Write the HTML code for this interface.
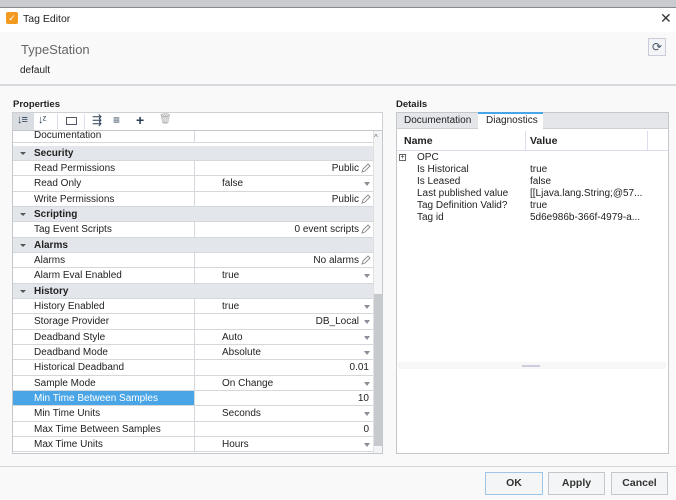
<!DOCTYPE html>
<html style="width:676px;height:500px;overflow:hidden"><head><style>
*{box-sizing:border-box;margin:0;padding:0}
body{width:676px;height:500px;overflow:hidden;background:#f9f9fa;font-family:"Liberation Sans",sans-serif;font-size:10px;color:#222;position:relative}
.a{position:absolute}
.row{position:absolute;left:13px;width:360px;height:15.35px;border-bottom:1px solid #d4d8dd;background:#fff}
.row .n{position:absolute;left:21px;top:2px;white-space:nowrap}
.row .v{position:absolute;left:181px;top:0;bottom:0;right:0;border-left:1px solid #d4d8dd}
.row .v span{position:absolute;left:27px;top:2px}
.row .v .r{left:auto;right:14px}
.dd{position:absolute;right:3px;top:6px;width:0;height:0;border-left:3px solid transparent;border-right:3px solid transparent;border-top:4px solid #8a8f96}
.pen{position:absolute;right:2px;top:2px;width:10px;height:10px}
.g{background:#e3e6ea}
.g .n{font-weight:bold}
.g .t{position:absolute;left:7px;top:6px;border-left:3px solid transparent;border-right:3px solid transparent;border-top:3px solid #555}
.sel{background:#4aa5e6;color:#fff}
.dr{position:absolute;left:405px;white-space:nowrap;font-size:10px}
.btn{position:absolute;top:472px;height:23px;border:1px solid #c4c8cd;background:#f4f5f6;font-weight:bold;font-size:10.5px;text-align:center;line-height:21px;color:#333}
</style></head><body>
<div class="a" style="left:0;top:0;width:676px;height:8px;background:#c9cbce;border-bottom:1px solid #888"></div>
<div class="a" style="left:0;top:8px;width:676px;height:24px;background:#fff"></div>
<div class="a" style="left:6px;top:12px;width:12px;height:12px;background:#f39a21;border-radius:2px;color:#fff;font-size:9px;line-height:12px;text-align:center">✓</div>
<div class="a" style="left:23px;top:13px;font-size:10.5px">Tag Editor</div>
<div class="a" style="left:660px;top:10px;font-size:14px;color:#333">✕</div>
<div class="a" style="left:21px;top:42px;font-size:13px;color:#666">TypeStation</div>
<div class="a" style="left:20px;top:65px;font-size:10px">default</div>
<div class="a" style="left:648px;top:38px;width:18px;height:18px;border:1px solid #ccd;background:#f3f4f6;color:#456;font-size:12px;text-align:center;line-height:16px">⟳</div>
<div class="a" style="left:0;top:84px;width:676px;height:2px;background:#d6d9dd"></div>

<div class="a" style="left:13px;top:99px;font-weight:bold;font-size:9.5px">Properties</div>
<div class="a" style="left:12px;top:112px;width:371px;height:19px;background:#fff;border:1px solid #cdd1d6"></div>
<div class="a" style="left:13px;top:113px;width:21px;height:17px;background:#d9dde2"></div>
<div class="a" style="left:17px;top:114px;font-size:11px;color:#2a3f55;letter-spacing:-1px">↓≡</div>
<div class="a" style="left:38px;top:114px;font-size:11px;color:#2a3f55;letter-spacing:-1px">↓ᶻ</div>
<div class="a" style="left:66px;top:117px;width:11px;height:8px;border:1px solid #556"></div>
<div class="a" style="left:92px;top:113px;font-size:12px;color:#2a3f55">⇶</div>
<div class="a" style="left:113px;top:113px;font-size:12px;color:#2a3f55">≡</div>
<div class="a" style="left:136px;top:112px;font-size:14px;font-weight:bold;color:#2a3f55">+</div>
<div class="a" style="left:159px;top:114px;font-size:10px;color:#aaa">🗑</div>
<div class="a" style="left:57px;top:114px;width:1px;height:15px;background:#dde"></div>
<div class="a" style="left:84px;top:114px;width:1px;height:15px;background:#dde"></div>

<div class="a" style="left:12px;top:130px;width:371px;height:324px;border:1px solid #c4c8cd;background:#fff;overflow:hidden">
<div style="position:absolute;left:-13px;top:-131px;width:384px;height:455px;overflow:hidden">
<div class="row" style="top:127.5px"><div class="n">Documentation</div><div class="v"></div></div>
<div class="row g" style="top:145.5px"><div class="t"></div><div class="n">Security</div></div>
<div class="row" style="top:160.85px"><div class="n">Read Permissions</div><div class="v"><span class="r">Public</span><svg class="pen" viewBox="0 0 10 10"><path d="M1 9L2 6 7 1 9 3 4 8Z" fill="none" stroke="#888" stroke-width=".9"/></svg></div></div>
<div class="row" style="top:176.2px"><div class="n">Read Only</div><div class="v"><span>false</span><div class="dd"></div></div></div>
<div class="row" style="top:191.55px"><div class="n">Write Permissions</div><div class="v"><span class="r">Public</span><svg class="pen" viewBox="0 0 10 10"><path d="M1 9L2 6 7 1 9 3 4 8Z" fill="none" stroke="#888" stroke-width=".9"/></svg></div></div>
<div class="row g" style="top:206.9px"><div class="t"></div><div class="n">Scripting</div></div>
<div class="row" style="top:222.25px"><div class="n">Tag Event Scripts</div><div class="v"><span class="r">0 event scripts</span><svg class="pen" viewBox="0 0 10 10"><path d="M1 9L2 6 7 1 9 3 4 8Z" fill="none" stroke="#888" stroke-width=".9"/></svg></div></div>
<div class="row g" style="top:237.6px"><div class="t"></div><div class="n">Alarms</div></div>
<div class="row" style="top:252.95px"><div class="n">Alarms</div><div class="v"><span class="r">No alarms</span><svg class="pen" viewBox="0 0 10 10"><path d="M1 9L2 6 7 1 9 3 4 8Z" fill="none" stroke="#888" stroke-width=".9"/></svg></div></div>
<div class="row" style="top:268.3px"><div class="n">Alarm Eval Enabled</div><div class="v"><span>true</span><div class="dd"></div></div></div>
<div class="row g" style="top:283.65px"><div class="t"></div><div class="n">History</div></div>
<div class="row" style="top:299px"><div class="n">History Enabled</div><div class="v"><span>true</span><div class="dd"></div></div></div>
<div class="row" style="top:314.35px"><div class="n">Storage Provider</div><div class="v"><span class="r">DB_Local</span><div class="dd"></div></div></div>
<div class="row" style="top:329.7px"><div class="n">Deadband Style</div><div class="v"><span>Auto</span><div class="dd"></div></div></div>
<div class="row" style="top:345.05px"><div class="n">Deadband Mode</div><div class="v"><span>Absolute</span><div class="dd"></div></div></div>
<div class="row" style="top:360.4px"><div class="n">Historical Deadband</div><div class="v"><span style="left:auto;right:4px">0.01</span></div></div>
<div class="row" style="top:375.75px"><div class="n">Sample Mode</div><div class="v"><span>On Change</span><div class="dd"></div></div></div>
<div class="row" style="top:391.1px"><div class="n sel" style="left:0;width:181px;height:14px;padding-left:21px;top:0;padding-top:2px">Min Time Between Samples</div><div class="v"><span style="left:auto;right:4px">10</span></div></div>
<div class="row" style="top:406.45px"><div class="n">Min Time Units</div><div class="v"><span>Seconds</span><div class="dd"></div></div></div>
<div class="row" style="top:421.8px"><div class="n">Max Time Between Samples</div><div class="v"><span style="left:auto;right:4px">0</span></div></div>
<div class="row" style="top:437.15px"><div class="n">Max Time Units</div><div class="v"><span>Hours</span><div class="dd"></div></div></div>
</div>
<div class="a" style="left:360px;top:0;width:10px;height:322px;background:#f3f4f5;border-left:1px solid #e0e0e0"></div>
<div class="a" style="left:361px;top:163px;width:8px;height:152px;background:#c6c9cd"></div>
<div class="a" style="left:361px;top:2px;font-size:8px;color:#666">^</div>
</div>

<div class="a" style="left:396px;top:99px;font-weight:bold;font-size:9.5px">Details</div>
<div class="a" style="left:396px;top:112px;width:273px;height:342px;border:1px solid #c4c8cd;background:#fff"></div>
<div class="a" style="left:397px;top:113px;width:271px;height:16px;background:#e4e6e9;border-bottom:1px solid #cdd1d6"></div>
<div class="a" style="left:404px;top:115px;font-size:10px">Documentation</div>
<div class="a" style="left:478px;top:112px;width:65px;height:18px;background:#fff;border-top:2px solid #4aa5e6"></div>
<div class="a" style="left:486px;top:115px;font-size:10px">Diagnostics</div>
<div class="a" style="left:397px;top:131px;width:271px;height:20px;background:#fff;border-bottom:1px solid #dde"></div>
<div class="a" style="left:404px;top:135px;font-weight:bold;font-size:10.5px">Name</div>
<div class="a" style="left:525px;top:131px;width:1px;height:20px;background:#dde"></div>
<div class="a" style="left:647px;top:131px;width:1px;height:20px;background:#dde"></div>
<div class="a" style="left:530px;top:135px;font-weight:bold;font-size:10.5px">Value</div>
<div class="a" style="left:399px;top:154px;width:7px;height:7px;border:1px solid #666;font-size:7px;line-height:5px;text-align:center">+</div>
<div class="dr" style="left:417px;top:152px">OPC</div>
<div class="dr" style="left:417px;top:164px">Is Historical</div><div class="dr" style="left:530px;top:164px">true</div>
<div class="dr" style="left:417px;top:176px">Is Leased</div><div class="dr" style="left:530px;top:176px">false</div>
<div class="dr" style="left:417px;top:188px">Last published value</div><div class="dr" style="left:530px;top:188px">[[Ljava.lang.String;@57...</div>
<div class="dr" style="left:417px;top:200px">Tag Definition Valid?</div><div class="dr" style="left:530px;top:200px">true</div>
<div class="dr" style="left:417px;top:212px">Tag id</div><div class="dr" style="left:530px;top:212px">5d6e986b-366f-4979-a...</div>
<div class="a" style="left:398px;top:362px;width:268px;height:7px;background:#f7f7f8"></div>
<div class="a" style="left:522px;top:365px;width:18px;height:2px;background:#ccd"></div>

<div class="a" style="left:0;top:466px;width:676px;height:1px;background:#d3d6da"></div>
<div class="btn" style="left:485px;width:58px;border-color:#9cc5e8">OK</div>
<div class="btn" style="left:548px;width:57px">Apply</div>
<div class="btn" style="left:611px;width:57px">Cancel</div>
</body></html>
